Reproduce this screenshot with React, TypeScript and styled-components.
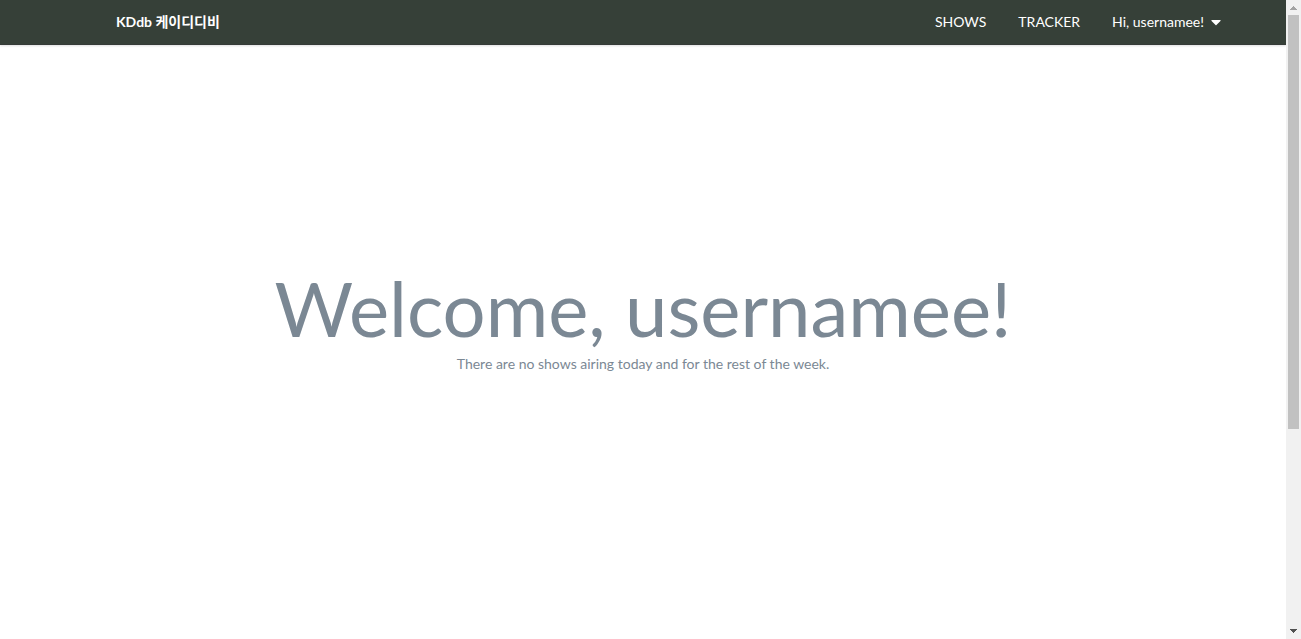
import React from 'react';
import styled, { createGlobalStyle } from 'styled-components';
import { FaCaretDown } from 'react-icons/fa';

const GlobalStyle = createGlobalStyle`
  *, *::before, *::after { box-sizing: border-box; }
  body {
    margin: 0;
    background: #fff;
    font-family: Lato, "Noto Sans CJK KR", "Liberation Sans", sans-serif;
    font-size: 14px;
    line-height: 20px;
    overflow: hidden;
  }
`;

const Shell = styled.div`
  display: grid;
  grid-template-columns: minmax(0, 1fr) 15px;
  height: 100vh;
`;

const Page = styled.div`
  display: flex;
  flex-direction: column;
`;

const Navbar = styled.header`
  background: #364038;
  border-bottom: 1px solid #353b37;
  box-shadow: 0 1px 2px rgba(34, 36, 38, 0.15);
`;

const NavInner = styled.nav`
  display: flex;
  justify-content: space-between;
  height: 44px;
  padding: 0 46px 0 100px;
`;

const NavGroup = styled.div`
  display: flex;
`;

const NavLink = styled.a<{ $brand?: boolean }>`
  display: flex;
  align-items: center;
  padding: 0 16px;
  color: #fff;
  font-weight: ${({ $brand }) => ($brand ? 700 : 400)};
  text-decoration: none;
`;

const UserMenu = styled.button`
  display: flex;
  align-items: center;
  gap: 4px;
  padding: 0 16px;
  border: 0;
  background: none;
  color: #fff;
  font: inherit;
  cursor: pointer;
`;

const Hero = styled.main`
  flex: 1;
  display: flex;
  flex-direction: column;
  align-items: center;
  justify-content: center;
  padding-bottom: 48px;
  color: #7b8894;
  text-align: center;
`;

const Title = styled.h1`
  margin: 0;
  font-size: 76px;
  font-weight: 400;
  line-height: 92px;
`;

const Message = styled.p`
  margin: 0;
`;

const Scrollbar = styled.div`
  display: flex;
  flex-direction: column;
  align-items: center;
  background: #f1f1f1;
`;

const Arrow = styled.svg`
  display: block;
  flex: none;
  width: 15px;
  height: 15px;
`;

const Track = styled.div`
  flex: 1;
  width: 11px;
`;

const Thumb = styled.div`
  height: 68%;
  background: #c1c1c1;
`;

export default function App() {
  return (
    <>
      <GlobalStyle />
      <Shell>
        <Page>
          <Navbar>
            <NavInner>
              <NavLink $brand href="#home">KDdb 케이디디비</NavLink>
              <NavGroup>
                <NavLink href="#shows">SHOWS</NavLink>
                <NavLink href="#tracker">TRACKER</NavLink>
                <UserMenu type="button" aria-haspopup="menu">
                  Hi, usernamee!
                  <FaCaretDown size={16} aria-hidden />
                </UserMenu>
              </NavGroup>
            </NavInner>
          </Navbar>
          <Hero>
            <Title>Welcome, usernamee!</Title>
            <Message>There are no shows airing today and for the rest of the week.</Message>
          </Hero>
        </Page>
        <Scrollbar aria-hidden>
          <Arrow viewBox="0 0 15 15" shapeRendering="crispEdges">
            <path d="M7 6h1v1h1v1h1v1h1v1H4V9h1V8h1V7h1z" fill="#a3a3a3" />
          </Arrow>
          <Track>
            <Thumb />
          </Track>
          <Arrow viewBox="0 0 15 15" shapeRendering="crispEdges">
            <path d="M4 5h7v1h-1v1h-1v1h-1v1H7V8H6V7H5V6H4z" fill="#505050" />
          </Arrow>
        </Scrollbar>
      </Shell>
    </>
  );
}
